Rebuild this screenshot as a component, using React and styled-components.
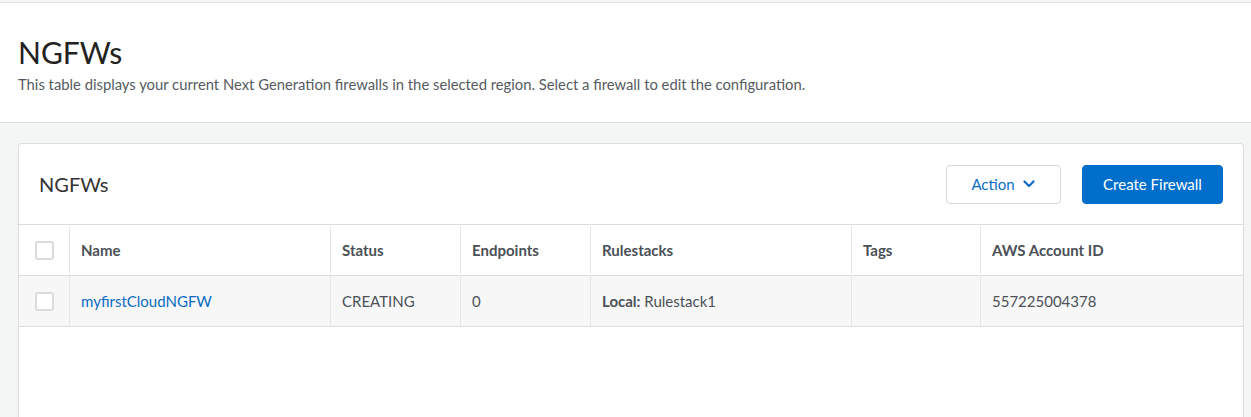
import React from "react";
import styled, { createGlobalStyle } from "styled-components";

const GlobalStyle = createGlobalStyle`
  html, body {
    margin: 0;
    padding: 0;
    background: #f4f5f5;
    font-family: Lato, "Open Sans", sans-serif;
  }
`;

const Page = styled.div`
  width: 100%;
  min-height: 417px;
  background: #f4f5f5;
  padding-top: 2px;
`;

const Header = styled.header`
  background: #ffffff;
  border-top: 1px solid #e1e3e3;
  border-bottom: 1px solid #dcdede;
  height: 121px;
  padding: 0 18px;
  box-sizing: border-box;
`;

const Title = styled.h1`
  margin: 0;
  padding-top: 31px;
  font-size: 30px;
  font-weight: 400;
  color: #222;
  line-height: 36px;
`;

const Subtitle = styled.p`
  margin: 5px 0 0;
  font-size: 14.8px;
  color: #555b60;
  line-height: 18px;
`;

const Card = styled.section`
  margin: 20px 7px 0 18px;
  background: #ffffff;
  border: 1px solid #dcdede;
  border-bottom: none;
  border-radius: 4px 4px 0 0;
  height: 273px;
`;

const CardHeader = styled.div`
  display: flex;
  align-items: center;
  justify-content: space-between;
  height: 80px;
  padding: 0 20px;
  border-bottom: 1px solid #dcdede;
`;

const CardTitle = styled.h2`
  margin: 0;
  font-size: 20px;
  font-weight: 400;
  color: #333;
`;

const Actions = styled.div`
  display: flex;
  gap: 21px;
`;

const Button = styled.button`
  height: 39px;
  width: ${(p) => (p.primary ? "141px" : "115px")};
  box-sizing: border-box;
  border-radius: 4px;
  font-family: inherit;
  font-size: 15px;
  display: flex;
  align-items: center;
  justify-content: center;
  gap: 7px;
  padding: 0;
  cursor: pointer;
  border: 1px solid ${(p) => (p.primary ? "#006fcc" : "#d6d8d8")};
  background: ${(p) => (p.primary ? "#006fcc" : "#ffffff")};
  color: ${(p) => (p.primary ? "#ffffff" : "#0a6cc4")};
`;

const Row = styled.div`
  display: grid;
  grid-template-columns: 50px 261px 130px 130px 261px 129px 1fr;
  height: 50px;
  border-bottom: 1px solid #dcdede;
  background: ${(p) => (p.shaded ? "#f7f7f7" : "#ffffff")};
`;

const Cell = styled.div`
  display: flex;
  align-items: center;
  padding: 0 11px;
  font-size: 15px;
  color: ${(p) => (p.head ? "#4a5056" : "#4c5157")};
  font-weight: ${(p) => (p.head ? 700 : 400)};
  border-left: ${(p) => (p.first ? "none" : "1px solid #e4e6e6")};
  margin: ${(p) => (p.head ? "2px 0" : "0")};
`;

const CheckCell = styled(Cell)`
  justify-content: center;
  padding: 0 0 0 1px;
`;

const Checkbox = styled.span`
  width: 19px;
  height: 19px;
  box-sizing: border-box;
  border: 2px solid #dadcdc;
  border-radius: 3px;
  background: #fff;
`;

const Link = styled.a`
  color: #0a6cc4;
  text-decoration: none;
`;

const Chevron = () => (
  <svg width="14" height="14" viewBox="0 0 14 14">
    <path d="M2.5 4.5 L7 9 L11.5 4.5" fill="none" stroke="#0a6cc4" strokeWidth="2.2" strokeLinecap="round" strokeLinejoin="round" />
  </svg>
);

const columns = ["Name", "Status", "Endpoints", "Rulestacks", "Tags", "AWS Account ID"];

const App = () => {
  return (
    <Page>
      <GlobalStyle />
      <Header>
        <Title>NGFWs</Title>
        <Subtitle>
          This table displays your current Next Generation firewalls in the selected region. Select a firewall to edit the configuration.
        </Subtitle>
      </Header>
      <Card>
        <CardHeader>
          <CardTitle>NGFWs</CardTitle>
          <Actions>
            <Button>
              Action <Chevron />
            </Button>
            <Button primary>Create Firewall</Button>
          </Actions>
        </CardHeader>
        <Row>
          <CheckCell head first>
            <Checkbox />
          </CheckCell>
          {columns.map((c) => (
            <Cell head key={c}>
              {c}
            </Cell>
          ))}
        </Row>
        <Row shaded>
          <CheckCell first>
            <Checkbox />
          </CheckCell>
          <Cell>
            <Link href="#">myfirstCloudNGFW</Link>
          </Cell>
          <Cell>CREATING</Cell>
          <Cell>0</Cell>
          <Cell>
            <b style={{ fontWeight: 700 }}>Local:</b>&nbsp;Rulestack1
          </Cell>
          <Cell />
          <Cell>557225004378</Cell>
        </Row>
      </Card>
    </Page>
  );
};

export default App;
